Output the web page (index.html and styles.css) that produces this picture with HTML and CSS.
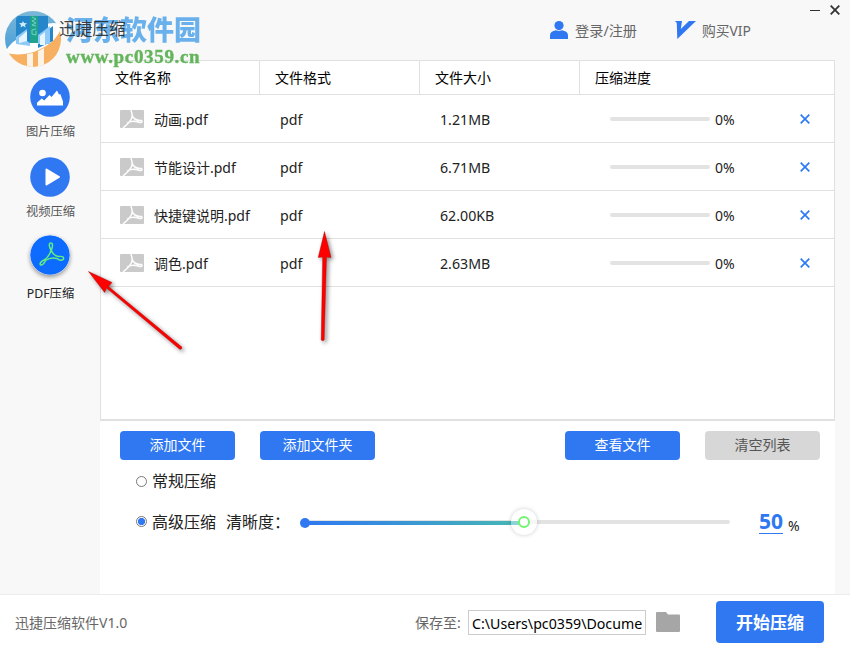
FILE: index.html
```html
<!DOCTYPE html>
<html lang="zh-CN">
<head>
<meta charset="utf-8">
<title>迅捷压缩</title>
<link rel="stylesheet" href="styles.css">
</head>
<body>
<svg class="defs" width="0" height="0" aria-hidden="true">
  <symbol id="file" viewBox="0 0 24 18">
    <rect width="24" height="18" rx="1" fill="#cacaca"/>
    <path d="M11.3 0C10.800 2 12.600 4 12.200 6C11.800 9 8 14 3.500 17.500M12.200 5.500C13 8 16 10.500 21.500 10.500C23 11.500 21 13 19 12.300C14 10.500 10 11.500 7.500 12.800" fill="none" stroke="#fff" stroke-width="1.500" stroke-linecap="round"/>
  </symbol>
  <symbol id="cross" viewBox="0 0 10 10"><path d="M.7.7L9.3 9.3M9.3.7L.7 9.3" stroke="#2f7af2" stroke-width="1.7"/></symbol>
</svg>
<div class="window">
  <header class="top">
    <span class="app-name">迅捷压缩</span>
    <a class="login"><svg width="18" height="18" viewBox="0 0 18 18"><circle cx="9" cy="4.6" r="4.6" fill="#2f78f2"/><path d="M0 18v-3.5Q0 10 6 9.2L9 10l3-.8q6 .8 6 5.3V18z" fill="#2f78f2"/></svg>登录/注册</a>
    <a class="vip"><svg width="21" height="18" viewBox="0 0 21 18"><path d="M0 0h7l-1.2 8L14 0h7L2.3 18 1.8 2z" fill="#2f78f2"/></svg>购买VIP</a>
    <div class="controls"><svg width="30" height="10" viewBox="0 0 30 10"><path d="M0 5.5h10" stroke="#333" stroke-width="1"/><path d="M20.7.7l8.6 8.6M29.3.7l-8.6 8.6" stroke="#333" stroke-width="1.8"/></svg></div>
  </header>
  <div class="middle">
    <nav class="side">
      <a class="tool"><svg width="40" height="40" viewBox="0 0 40 40"><circle cx="20" cy="20" r="19.8" fill="#2f78f2"/><circle cx="12.5" cy="16" r="3.3" fill="#fff"/><path d="M7 28.5v-2.7l4.7-4.3 2.5 2 5.3-5.5 2 2L27 13.6l2 3.9 1.3-.5L33 24.5v4z" fill="#fff"/></svg><span>图片压缩</span></a>
      <a class="tool video"><svg width="40" height="40" viewBox="0 0 40 40"><circle cx="20" cy="20" r="19.8" fill="#2f78f2"/><path d="M16.5 12.5L29 20l-12.500 7.500z" fill="#fff" stroke="#fff" stroke-width="2" stroke-linejoin="round"/></svg><span>视频压缩</span></a>
      <a class="tool pdf"><svg width="40" height="40" viewBox="0 0 40 40"><circle cx="20" cy="20" r="19.8" fill="#0d6bff"/><g fill="none" stroke="#5fec80" stroke-width="1.5" stroke-linejoin="round"><path d="M21 15C18.500 11 19 8 20.800 8C23 8 23 11 21.300 15C22 18 25 21 28.500 21.500C33 21 34 22 33.500 24C32 26 29 25.500 27 23.500C23 22.500 19 23 15.500 25.500C14.500 28 12 31 10.300 29.700C9.500 28 12 26 15 24.500C18.500 21.500 20.500 18 21 15z"/></g></svg><span>PDF压缩</span></a>
    </nav>
    <main class="content">
      <section class="list">
        <div class="row head"><span>文件名称</span><span>文件格式</span><span>文件大小</span><span>压缩进度</span></div>
        <div class="row item"><div class="name"><svg><use href="#file"/></svg><span>动画.pdf</span></div><span>pdf</span><span>1.21MB</span><div class="progress"><i></i><span>0%</span><svg><use href="#cross"/></svg></div></div>
        <div class="row item"><div class="name"><svg><use href="#file"/></svg><span>节能设计.pdf</span></div><span>pdf</span><span>6.71MB</span><div class="progress"><i></i><span>0%</span><svg><use href="#cross"/></svg></div></div>
        <div class="row item"><div class="name"><svg><use href="#file"/></svg><span>快捷键说明.pdf</span></div><span>pdf</span><span>62.00KB</span><div class="progress"><i></i><span>0%</span><svg><use href="#cross"/></svg></div></div>
        <div class="row item"><div class="name"><svg><use href="#file"/></svg><span>调色.pdf</span></div><span>pdf</span><span>2.63MB</span><div class="progress"><i></i><span>0%</span><svg><use href="#cross"/></svg></div></div>
      </section>
      <div class="buttons"><button>添加文件</button><button>添加文件夹</button><button class="view">查看文件</button><button class="clear">清空列表</button></div>
      <div class="option normal"><i class="radio"></i><span>常规压缩</span></div>
      <div class="option advanced"><i class="radio on"></i><span>高级压缩</span><span class="clarity">清晰度：</span>
        <svg class="slider" width="430" height="32" viewBox="0 0 430 32">
          <defs><linearGradient id="range"><stop stop-color="#2f78f2"/><stop offset="1" stop-color="#46b8b4"/></linearGradient></defs>
          <rect x="3" y="14" width="427" height="4" rx="2" fill="#e3e3e3"/><rect x="5" y="15" width="216" height="4" fill="url(#range)"/>
          <circle cx="5" cy="17" r="5" fill="#2f78f2"/><circle class="halo" cx="224" cy="16" r="13" fill="#fff"/><path d="M211 17h9" stroke="#8bd5d2" stroke-width="4"/><path d="M229 16h8" stroke="#f6f6f6" stroke-width="4"/><circle cx="224" cy="16" r="5" fill="#fff" stroke="#72f575" stroke-width="2"/>
        </svg>
        <b>50</b><span class="percent">%</span>
      </div>
    </main>
  </div>
  <footer class="bottom">
    <span class="version">迅捷压缩软件V1.0</span><span class="save">保存至:</span><div class="path">C:\Users\pc0359\Docume</div>
    <svg class="folder" width="24" height="20" viewBox="0 0 24 20"><path d="M0 1q0-1 1-1h9l2 2.500h11q1 0 1 1V19q0 1-1 1H1q-1 0-1-1z" fill="#a6a6a6"/></svg>
    <button class="start">开始压缩</button>
  </footer>
  <div class="watermark">
    <svg width="58" height="58" viewBox="0 0 58 58">
      <defs>
        <linearGradient id="sky" x2="0" y2="1"><stop stop-color="#6fb0d3"/><stop offset="1" stop-color="#3a97d8"/></linearGradient>
        <clipPath id="disc"><circle cx="28" cy="28" r="28"/></clipPath>
      </defs>
      <g clip-path="url(#disc)">
        <path d="M0 0h54v16Q42 33 0 38z" fill="url(#sky)"/>
        <path d="M56 14v42H0V42Q42 44 56 14z" fill="#f7a951"/>
        <path d="M22 43l6-1v14h-6zM33 40l6-3v20h-6z" fill="#fff" opacity=".85"/>
      </g>
      <path d="M54 13C42 9 26 19 8 31Q-3 41 7 43C26 46 51 34 56 17z" fill="#fff"/>
      <path d="M14 5h29v14l5-4v15l-15 7V18H25v15H11V9q0-4 3-4z" fill="#0f7ac5"/>
      <path d="M11 33V26l11-8v12l3 2v3l-14-2zM33 24l12-9v18H33z" fill="#83c6f8"/>
      <path d="M14 27l8-7v10l-8 2zM35 25l5-4v13h-5z" fill="#e6f5ff"/>
      <path d="M25 5h8v27h-8z" fill="#079b83"/><path d="M27 6l4 2-4 2 4 2-4 2 4 1M31 18l-4 1v4l4 1v-4" fill="none" stroke="#69cbb8"/>
      <path d="M18 10l1 2 3 .3-2 1.700.5 2.500-2.500-1.500-2.500 1.500.5-2.500-2-1.700 3-.3z" fill="#c9e9fb"/>
    </svg>
    <div class="site"><strong>河东软件园</strong><em>www.pc0359.cn</em></div>
  </div>
  <svg class="arrows" width="290" height="140" viewBox="80 220 290 140">
    <g fill="#f00" stroke="#a50000" stroke-width=".4"><path d="M88.500 271.500l23.500 11-3.500 4 73.300 60.500q.5 2-1.800 2.400L106.500 288l-1.800 4.500zM324.500 231.500l6.500 26-4.500-.5-2.300 83q-1.500 1.500-3 0l1.500-83-4.500.5z"/></g>
  </svg>
</div>
</body>
</html>
```
FILE: styles.css
```css
* { box-sizing: border-box; }
body { margin: 0; font: 14px/20px "Noto Sans", "Noto Sans CJK SC", sans-serif; color: #222; }
svg { display: block; flex: none; }
.defs { position: absolute; }
.window { position: relative; width: 850px; height: 650px; overflow: hidden; background: #f8f8f8; display: flex; flex-direction: column; }
.top { height: 60px; flex: none; display: flex; }
.app-name { position: relative; z-index: 2; width: 490px; padding: 19px 0 0 59px; font-size: 16.7px; color: #222d; }
.login, .vip { display: flex; color: #666; padding-top: 21px; gap: 7px; }
.login { width: 125px; margin-left: 60px; font-size: 14.2px; }
.vip { width: 120px; gap: 6px; font-size: 13.8px; }
.controls { padding: 5px 0 0 15px; }
.middle { flex: none; height: 534px; display: flex; }
.side { width: 100px; display: flex; flex-direction: column; align-items: center; padding: 17px 0 0 1px; }
.tool { height: 80px; display: flex; flex-direction: column; align-items: center; gap: 5px; font-size: 12.3px; color: #555; }
.pdf { gap: 9px; color: #222; margin-top: -2px; }
.pdf svg { margin-left: -2px; border-radius: 50%; box-shadow: 0 2px 4px #0006; }
.content { width: 735px; background: #fff; display: flex; flex-direction: column; }
.list { height: 361px; flex: none; border: 1px solid #e0e0e0; border-bottom-width: 2px; }
.row { display: grid; grid-template-columns: 159px 160px 160px 1fr; border-bottom: 1px solid #e0e0e0; }
.head { height: 34px; color: #000; }
.head span { padding: 7px 0 0 15px; border-right: 1px solid #e0e0e0; }
.head span:first-child { padding-left: 14px; }
.head span:last-child { border-right: 0; }
.item { height: 48px; align-items: center; font-size: 14.2px; }
.item > span { padding: 2px 0 0 20px; }
.name { display: flex; align-items: center; padding-left: 19px; gap: 10px; font-size: 14px; white-space: nowrap; }
.name svg { width: 24px; height: 18px; }
.name span { padding-top: 2px; }
.progress { display: flex; align-items: center; padding-left: 30px; font-size: 14px; }
.progress i { width: 100px; height: 4px; border-radius: 2px; background: #e3e3e3; margin-right: 5px; }
.progress span { width: 85px; padding-top: 2px; }
.progress svg { width: 10px; height: 10px; }
.buttons { display: flex; padding: 10px 15px 0 20px; gap: 25px; }
button { width: 115px; height: 29px; border: 0; border-radius: 4px; padding: 0 0 2px; font: inherit; color: #fff; background: #2f78f2; }
.view { margin-left: auto; }
.clear { color: #555; background: #d7d7d7; }
.option { display: flex; align-items: center; padding-left: 36px; font-size: 16px; }
.normal { height: 42px; }
.advanced { height: 40px; }
.radio { width: 11px; height: 11px; border: 1px solid #777; border-radius: 50%; margin-right: 5px; }
.on { position: relative; top: -1px; background: radial-gradient(circle, #2f78f2 0 3.2px, #fff 4px); }
.clarity { width: 74px; margin-left: 10px; white-space: nowrap; }
.slider { overflow: visible; }
.halo { filter: drop-shadow(0 0 2px #0003); }
.advanced b { font-size: 21px; line-height: 20px; padding-bottom: 2px; color: #2f78f2; border-bottom: 1px solid #2f78f2; margin: 0 5px 0 29px; }
.percent { font-size: 14px; padding-top: 8px; }
.bottom { height: 56px; flex: none; border-top: 1px solid #ececec; background: #fff; display: flex; align-items: center; color: #666; }
.version { width: 400px; padding-left: 15px; }
.save { width: 53px; margin-left: 15px; }
.path { width: 178px; height: 25px; border: 1px solid #ccc; color: #000; background: #fff; padding: 3px 3px 0; font-size: 14.2px; line-height: 20px; white-space: nowrap; overflow: hidden; }
.folder { margin: -2px 36px 0 10px; }
.start { width: 108px; height: 42px; margin-top: -2px; padding: 2px 0 0; font-size: 17px; font-weight: 600; }
.watermark { position: absolute; left: 5px; top: 11px; display: flex; opacity: .9; }
.site { display: flex; flex-direction: column; margin-left: 3px; white-space: nowrap; }
.site strong { font: 900 27px/35px "Noto Sans CJK SC", sans-serif; color: #459fe9; opacity: .88; }
.site em { font: bold 19px/22px "Liberation Serif", serif; letter-spacing: .67px; color: #54ae4c; -webkit-text-stroke: .4px #54ae4c; }
.arrows { position: absolute; left: 80px; top: 220px; filter: drop-shadow(2px 2px 2px #0007); }
```
